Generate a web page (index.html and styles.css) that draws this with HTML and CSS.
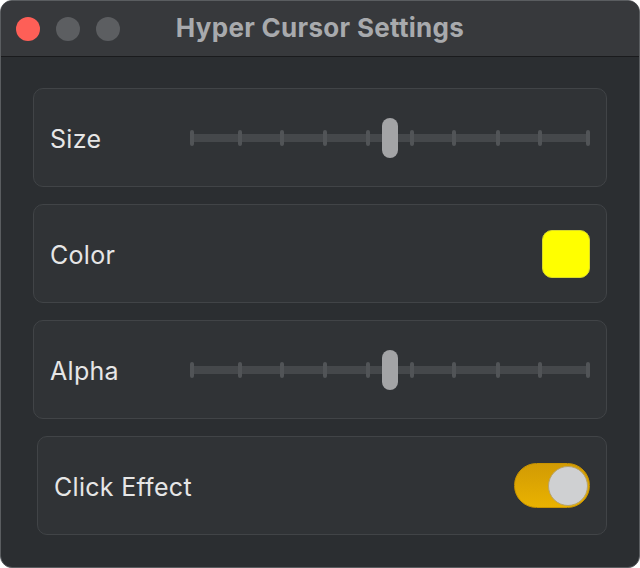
FILE: index.html
```html
<!DOCTYPE html>
<html>
<head>
<meta charset="utf-8">
<link rel="stylesheet" href="styles.css">
</head>
<body>
<div class="window">
  <div class="titlebar">
    <div class="lights">
      <span class="light red"></span>
      <span class="light"></span>
      <span class="light"></span>
    </div>
    <div class="title">Hyper Cursor Settings</div>
    <div class="spacer"></div>
  </div>
  <div class="content">
    <div class="card">
      <span class="label">Size</span>
      <div class="slider">
        <div class="track"></div>
        <span class="tick" style="left:0px"></span>
        <span class="tick" style="left:48px"></span>
        <span class="tick" style="left:90px"></span>
        <span class="tick" style="left:133px"></span>
        <span class="tick" style="left:176px"></span>
        <span class="tick" style="left:220px"></span>
        <span class="tick" style="left:262px"></span>
        <span class="tick" style="left:306px"></span>
        <span class="tick" style="left:348px"></span>
        <span class="tick" style="left:396px"></span>
        <span class="thumb" style="left:192px"></span>
      </div>
    </div>
    <div class="card">
      <span class="label">Color</span>
      <span class="swatch"></span>
    </div>
    <div class="card">
      <span class="label">Alpha</span>
      <div class="slider">
        <div class="track"></div>
        <span class="tick" style="left:0px"></span>
        <span class="tick" style="left:48px"></span>
        <span class="tick" style="left:90px"></span>
        <span class="tick" style="left:133px"></span>
        <span class="tick" style="left:176px"></span>
        <span class="tick" style="left:220px"></span>
        <span class="tick" style="left:262px"></span>
        <span class="tick" style="left:306px"></span>
        <span class="tick" style="left:348px"></span>
        <span class="tick" style="left:396px"></span>
        <span class="thumb" style="left:192px"></span>
      </div>
    </div>
    <div class="card card-shift">
      <span class="label">Click Effect</span>
      <span class="toggle"><span class="knob"></span></span>
    </div>
  </div>
</div>
</body>
</html>
```

FILE: styles.css
```css
html, body {
  margin: 0;
  padding: 0;
  background: #ffffff;
}
body {
  font-family: "Inter", "Liberation Sans", sans-serif;
}
.window {
  width: 640px;
  height: 568px;
  box-sizing: border-box;
  border: 1px solid #5a5d60;
  border-radius: 12px;
  overflow: hidden;
  background: #2b2e31;
  display: flex;
  flex-direction: column;
}
.titlebar {
  height: 55px;
  flex: none;
  background: #37393c;
  border-bottom: 1px solid #1a1b1d;
  display: grid;
  grid-template-columns: 1fr auto 1fr;
  align-items: center;
}
.lights {
  display: flex;
  gap: 16px;
  padding-left: 15px;
}
.light {
  width: 24px;
  height: 24px;
  border-radius: 50%;
  background: #5c5e61;
}
.light.red {
  background: #fe5f57;
}
.title {
  font-family: "Inter", "Liberation Sans", sans-serif;
  font-weight: 700;
  font-size: 26px;
  color: #a8aaad;
  letter-spacing: 0.3px;
  padding-bottom: 3px;
}
.content {
  flex: 1;
  padding: 31px 32px 0 32px;
  display: flex;
  flex-direction: column;
  gap: 17px;
}
.card {
  height: 99px;
  box-sizing: border-box;
  border: 1px solid #414447;
  border-radius: 10px;
  background: #303336;
  display: flex;
  align-items: center;
  justify-content: space-between;
  padding: 0 16px 0 16px;
}
.card-shift {
  margin-left: 4px;
}
.label {
  font-size: 25px;
  letter-spacing: 0.3px;
  color: #e6e6e6;
  padding-top: 2px;
}
.slider {
  position: relative;
  width: 400px;
  height: 40px;
}
.track {
  position: absolute;
  left: 0;
  right: 0;
  top: 16px;
  height: 8px;
  background: #45484b;
  border-radius: 1px;
}
.tick {
  position: absolute;
  top: 12px;
  width: 4px;
  height: 16px;
  border-radius: 2px;
  background: #515457;
}
.thumb {
  position: absolute;
  top: 0;
  width: 16px;
  height: 40px;
  border-radius: 8px;
  background: #a3a4a6;
}
.swatch {
  width: 48px;
  height: 48px;
  box-sizing: border-box;
  border-radius: 10px;
  background: #ffff00;
  border: 1px solid #d9d92a;
}
.toggle {
  width: 76px;
  height: 45px;
  box-sizing: border-box;
  border-radius: 23px;
  background: linear-gradient(#d29b04, #e9b200);
  border: 1px solid #c89300;
  display: flex;
  align-items: center;
  justify-content: flex-end;
  padding-right: 1px;
}
.knob {
  width: 40px;
  height: 40px;
  box-sizing: border-box;
  border-radius: 50%;
  background: #cfd0d2;
  border: 1px solid #b8a36a;
}
```
